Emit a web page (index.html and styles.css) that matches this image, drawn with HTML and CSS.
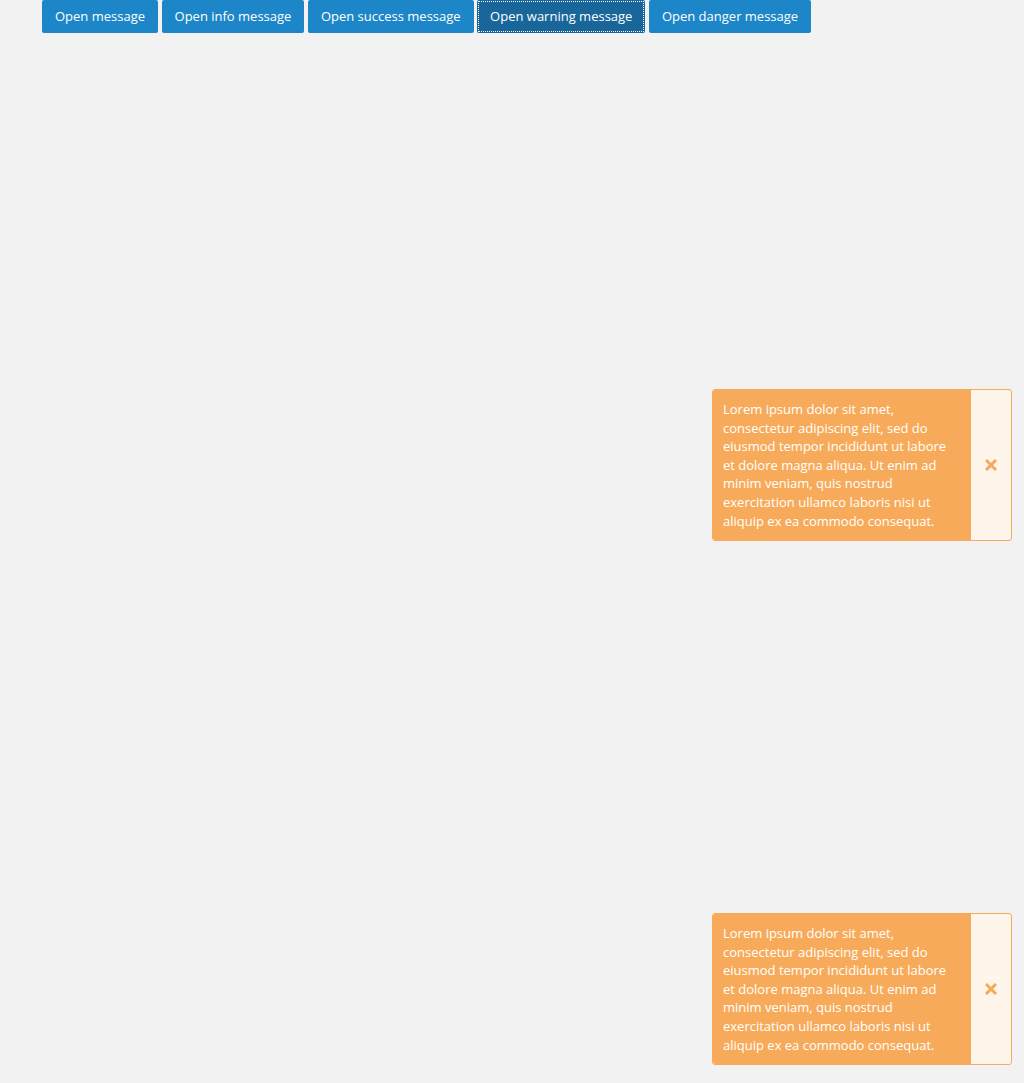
FILE: index.html
```html
<!DOCTYPE html>
<html>
<head>
<meta charset="utf-8">
<link rel="stylesheet" href="styles.css">
</head>
<body>
<div class="toolbar">
  <button class="btn">Open message</button>
  <button class="btn">Open info message</button>
  <button class="btn">Open success message</button>
  <button class="btn btn-focus">Open warning message</button>
  <button class="btn">Open danger message</button>
</div>

<div class="toast toast-one">
  <div class="toast-body">Lorem ipsum dolor sit amet, consectetur adipiscing elit, sed do eiusmod tempor incididunt ut labore et dolore magna aliqua. Ut enim ad minim veniam, quis nostrud exercitation ullamco laboris nisi ut aliquip ex ea commodo consequat.</div>
  <div class="toast-close">
    <svg width="12" height="12" viewBox="0 0 12 12"><path d="M2 2 L10 10 M10 2 L2 10" stroke="#f7a955" stroke-width="3" stroke-linecap="square"/></svg>
  </div>
</div>

<div class="toast toast-two">
  <div class="toast-body">Lorem ipsum dolor sit amet, consectetur adipiscing elit, sed do eiusmod tempor incididunt ut labore et dolore magna aliqua. Ut enim ad minim veniam, quis nostrud exercitation ullamco laboris nisi ut aliquip ex ea commodo consequat.</div>
  <div class="toast-close">
    <svg width="12" height="12" viewBox="0 0 12 12"><path d="M2 2 L10 10 M10 2 L2 10" stroke="#f7a955" stroke-width="3" stroke-linecap="square"/></svg>
  </div>
</div>
</body>
</html>
```

FILE: styles.css
```css
html, body {
  margin: 0;
  padding: 0;
  background: #f2f2f2;
  height: 100%;
  font-family: "Open Sans", "Liberation Sans", sans-serif;
}
body {
  position: relative;
  overflow: hidden;
}
.toolbar {
  display: flex;
  gap: 3.5px;
  padding-left: 42px;
}
.btn {
  font-family: "Open Sans", "Liberation Sans", sans-serif;
  font-size: 13px;
  color: #ffffff;
  background: #1d86c8;
  border: none;
  border-radius: 2px;
  height: 33px;
  padding: 0 13px 2px;
  cursor: pointer;
}
.btn-focus {
  background: #19669a;
  outline: 1px dotted #ffffff;
  outline-offset: -2px;
}
.toast {
  position: absolute;
  right: 12px;
  width: 300px;
  display: flex;
  border: 1px solid #f7ab5a;
  border-radius: 3px;
  overflow: hidden;
  background: #fef5eb;
  box-sizing: border-box;
}
.toast-one { top: 389px; }
.toast-two { top: 913px; }
.toast-body {
  width: 258px;
  box-sizing: border-box;
  background: #f7ab5a;
  color: #ffffff;
  font-size: 13px;
  line-height: 18.6px;
  padding: 10px 17px 10px 10px;
}
.toast-close {
  flex: 1;
  display: flex;
  align-items: center;
  justify-content: center;
}
.toast-close svg { display: block; }
```
